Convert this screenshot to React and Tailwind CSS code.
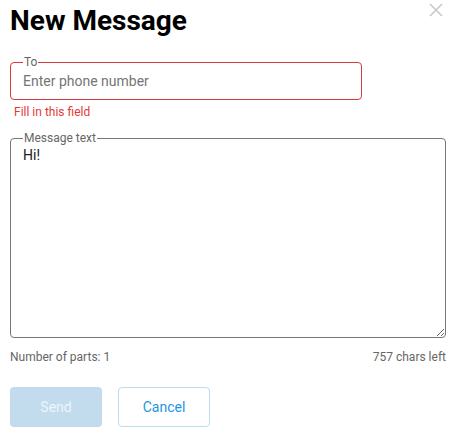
import { useState } from "react";

function CloseIcon() {
  return (
    <svg width="14" height="14" viewBox="0 0 14 14" fill="none">
      <path d="M1 1L13 13M13 1L1 13" stroke="#c9c9c9" strokeWidth="1.6" />
    </svg>
  );
}

export default function App() {
  const [to, setTo] = useState("");
  const [text, setText] = useState("Hi!");

  return (
    <div
      className="relative w-[455px] h-[435px] bg-white pt-[5px] pl-[10px] pr-[9px]"
      style={{ fontFamily: "Roboto, 'Liberation Sans', sans-serif" }}
    >
      <button className="absolute left-[429px] top-[3px] p-0">
        <CloseIcon />
      </button>

      <h1 className="text-[28px] leading-[32px] font-bold text-black">New Message</h1>

      <fieldset className="mt-[18px] w-[352px] border border-[#d9393b] rounded-[4px] px-0 pb-[6px] m-0">
        <legend className="ml-[12px] px-[1px] text-[12px] leading-[14px] text-[#666]">To</legend>
        <input
          value={to}
          onChange={(e) => setTo(e.target.value)}
          placeholder="Enter phone number"
          className="block w-full h-[24px] px-[12px] text-[14px] text-[#212121] placeholder:text-[#757575] outline-none bg-transparent"
        />
      </fieldset>
      <div className="mt-[5px] pl-[4px] text-[12px] leading-[14px] text-[#e53935]">Fill in this field</div>

      <fieldset className="mt-[12px] border border-[#777] rounded-[4px] p-0 m-0">
        <legend className="ml-[12px] px-[1px] text-[12px] leading-[14px] text-[#666]">Message text</legend>
        <textarea
          value={text}
          onChange={(e) => setText(e.target.value)}
          className="block w-full h-[192px] px-[12px] pt-0 text-[14px] leading-[20px] text-[#212121] outline-none bg-transparent"
        />
      </fieldset>

      <div className="mt-[12px] flex justify-between text-[12px] leading-[14px] text-[#666]">
        <span>Number of parts: 1</span>
        <span>757 chars left</span>
      </div>

      <div className="mt-[23px] flex gap-[16px]">
        <button
          disabled
          className="w-[92px] h-[40px] rounded-[4px] bg-[#c2dcee] text-[14px] text-[#eef5fb]"
        >
          Send
        </button>
        <button className="w-[92px] h-[40px] rounded-[4px] border border-[#bddcf0] bg-white text-[14px] text-[#1e95e3]">
          Cancel
        </button>
      </div>
    </div>
  );
}
